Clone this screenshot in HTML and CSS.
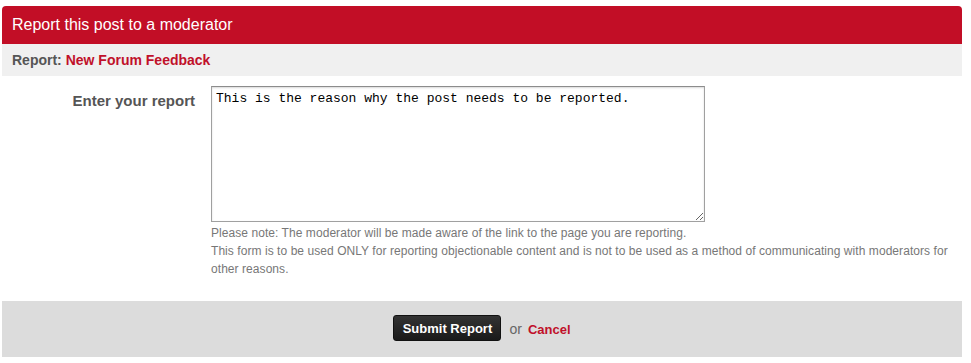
FILE: index.html
```html
<!DOCTYPE html>
<html lang="en">
<head>
  <meta charset="UTF-8" />
  <title>Report Post</title>
  <link rel="stylesheet" href="styles.css">
</head>

<body>
  <div class="overlay">
    <h2 class="overlay-title">Report this post to a moderator</h2>
    <div class="report-subject">
      Report: <a href="#">New Forum Feedback</a>
    </div>

    <div class="form-row">
      <label class="form-label" for="reportMessage">Enter your report</label>
      <div class="form-field">
        <textarea id="reportMessage" class="report-text">This is the reason why the post needs to be reported.</textarea>
        <p class="explain">Please note: The moderator will be made aware of the link to the page you are reporting.</p>
        <p class="explain">This form is to be used ONLY for reporting objectionable content and is not to be used as a method of communicating with moderators for other reasons.</p>
      </div>
    </div>

    <div class="submit-unit">
      <button class="button-primary">Submit Report</button>
      <span class="or">or</span> <a href="#" class="cancel">Cancel</a>
    </div>
  </div>
</body>
</html>
```

FILE: styles.css
```css
body {
  margin: 0;
  background: #ffffff;
  font-family: "Liberation Sans", Arial, sans-serif;
  color: #555;
}

.overlay {
  width: 960px;
  margin: 6px 0 0 2px;
}

.overlay-title {
  margin: 0;
  height: 38px;
  line-height: 38px;
  padding: 0 10px;
  background-color: #c20e26;
  border-radius: 4px 4px 0 0;
  color: #ffffff;
  font-size: 16px;
  font-weight: normal;
}

.report-subject {
  height: 32px;
  line-height: 32px;
  padding: 0 10px;
  background-color: #f0f0f0;
  font-size: 14px;
  font-weight: bold;
  color: #555;
}

a {
  color: #c0102a;
  text-decoration: none;
  font-weight: bold;
}

.form-row {
  display: flex;
  gap: 16px;
  padding: 10px 0 23px;
}

.form-label {
  width: 193px;
  flex-shrink: 0;
  text-align: right;
  font-size: 15px;
  font-weight: bold;
  color: #555;
  padding-top: 6px;
}

.form-field {
  flex: 1;
}

.report-text {
  display: block;
  box-sizing: border-box;
  width: 494px;
  height: 136px;
  margin: 0;
  padding: 4px 4px;
  border: 1px solid #a0a0a0;
  border-top-color: #8c8c8c;
  box-shadow: inset 0 1px 2px rgba(0, 0, 0, 0.15);
  font-family: "Liberation Mono", "Courier New", monospace;
  font-size: 13px;
  color: #000;
  resize: both;
}

.explain {
  margin: 0;
  font-size: 12px;
  line-height: 18px;
  letter-spacing: 0.06px;
  color: #777;
}

.report-text + .explain {
  margin-top: 2px;
}

.submit-unit {
  height: 56px;
  background-color: #dcdcdc;
  display: flex;
  align-items: center;
  justify-content: center;
  gap: 6px;
  font-size: 13px;
}

.button-primary {
  height: 26px;
  width: 108px;
  padding: 0;
  border: 1px solid #111;
  border-radius: 3px;
  background: linear-gradient(#333333, #1a1a1a);
  color: #ffffff;
  font-family: "Liberation Sans", Arial, sans-serif;
  font-size: 13px;
  font-weight: bold;
  cursor: pointer;
  margin-right: 2px;
  margin-bottom: 2px;
}

.or {
  color: #666;
  font-size: 14px;
}

.cancel {
  font-size: 13px;
}
```
